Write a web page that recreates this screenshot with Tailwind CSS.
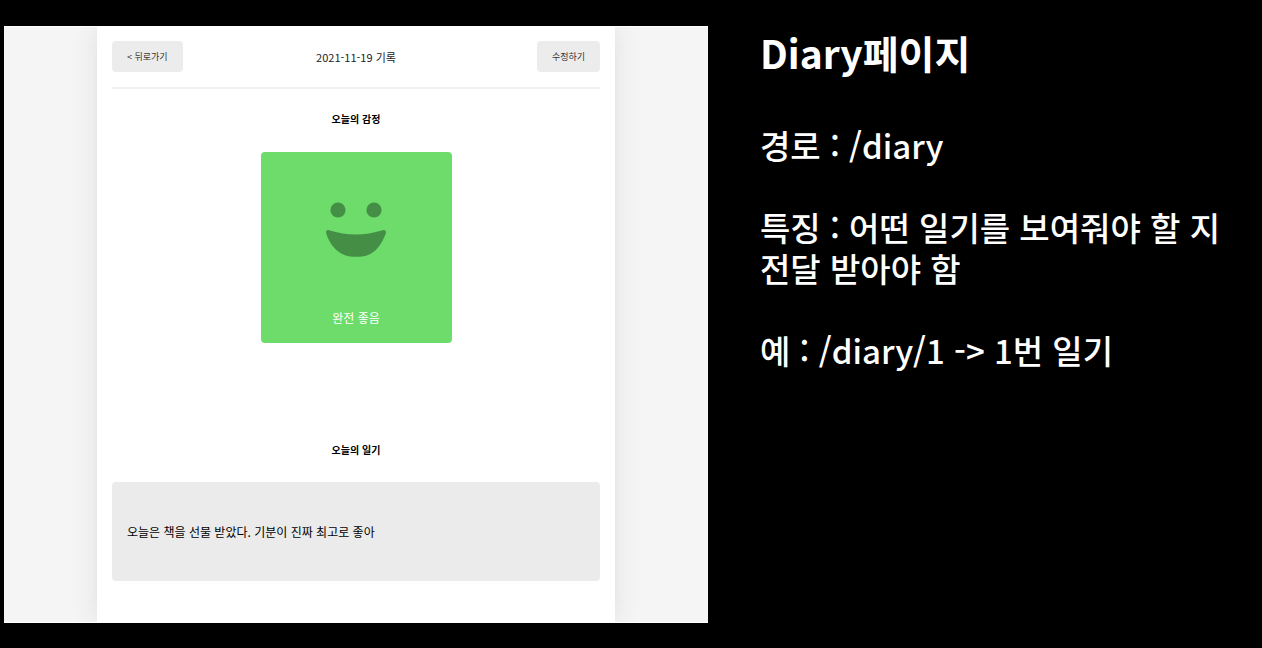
<!DOCTYPE html>
<html lang="ko">
<head>
<meta charset="utf-8">
<meta name="viewport" content="width=device-width, initial-scale=1">
<title>Diary페이지</title>
<script src="https://cdn.jsdelivr.net/npm/@tailwindcss/browser@4"></script>
</head>
<body class="bg-black font-['Noto_Sans_CJK_KR',sans-serif]">
<main class="grid min-h-screen grid-cols-[704fr_482fr] gap-x-[52px] pt-[26px] pr-5 pb-[25px] pl-1">
  <div class="flex justify-center overflow-hidden border-y border-white bg-[#f5f5f5] px-[93px]">
    <article class="w-full bg-white px-[15px] text-black shadow-[0_0_24px_rgba(100,100,111,0.15)]">
      <header class="grid grid-cols-[1fr_auto_1fr] items-center border-b-2 border-[#f0f0f0] pt-[14px] pb-[15px]">
        <button type="button" class="h-[31px] justify-self-start rounded-[4px] bg-[#ececec] px-[15px] text-[9px] leading-4 text-[#333]">&lt; 뒤로가기</button>
        <h1 class="text-[11px] leading-4 text-[#222]">2021-11-19 기록</h1>
        <button type="button" class="h-[31px] justify-self-end rounded-[4px] bg-[#ececec] px-[15px] text-[9px] leading-4 text-[#333]">수정하기</button>
      </header>
      <section class="flex flex-col items-center pt-[22px]">
        <h2 class="text-[10px] leading-4 font-bold">오늘의 감정</h2>
        <div class="mt-[25px] flex w-[191px] flex-col items-center rounded-[4px] bg-[#6ddc6a] pt-[50px] pb-[15px] text-white">
          <svg class="h-[56px] w-[62px]" viewBox="0 0 62 56" fill="#448e46" aria-hidden="true">
            <circle cx="13" cy="8" r="7.6"/>
            <circle cx="49" cy="8" r="7.6"/>
            <path d="M4 28.2Q31 36.6 57.5 28.2Q61.5 27.3 60.8 31.5C57 42 50 51 42.500 53.200C36 55.2 26 55.2 20 53.200C11 50 4 41 1.2 31.2C.7 28.5 2 27.3 4 28.2Z"/>
          </svg>
          <p class="mt-[50px] text-[12px] leading-5">완전 좋음</p>
        </div>
      </section>
      <section class="flex flex-col items-center pt-[99px]">
        <h2 class="text-[10px] leading-4 font-bold">오늘의 일기</h2>
        <p class="mt-6 w-full rounded-[4px] bg-[#ebebeb] px-[15px] py-[40px] text-[12px] leading-[19px]">오늘은 책을 선물 받았다. 기분이 진짜 최고로 좋아</p>
      </section>
    </article>
  </div>
  <aside class="text-[33px] leading-[41px] font-medium text-white">
    <h2 class="pt-[6px] text-[39px] font-bold">Diary페이지</h2>
    <p class="mt-[52px]">경로 : /diary</p>
    <p class="mt-[41px]">특징 : 어떤 일기를 보여줘야 할 지 전달 받아야 함</p>
    <p class="mt-[41px]">예 : /diary/1 -&gt; 1번 일기</p>
  </aside>
</main>
</body>
</html>
